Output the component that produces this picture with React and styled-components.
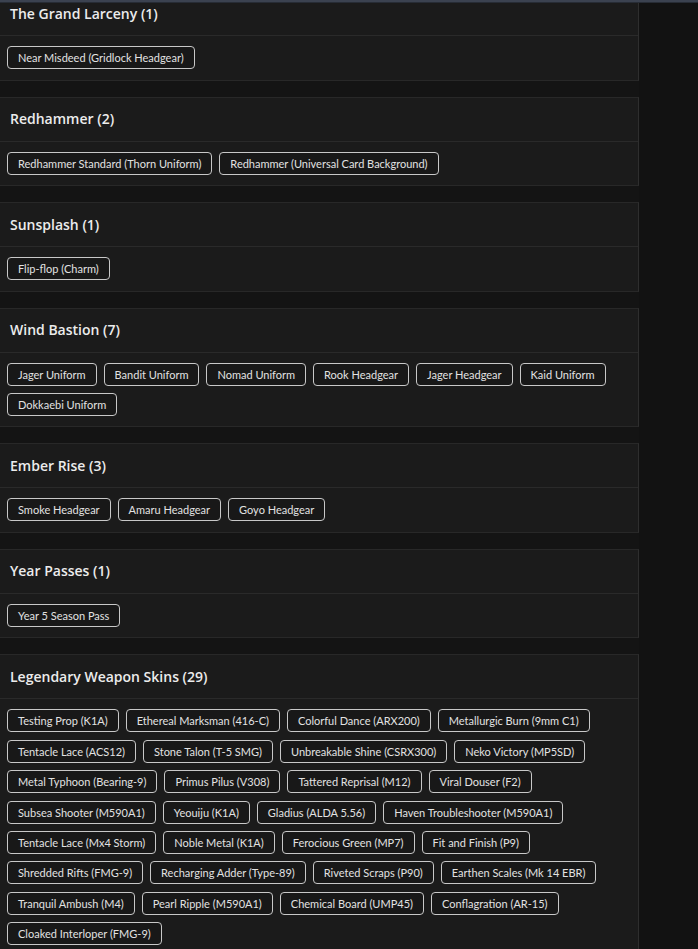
import React from "react";
import styled, { createGlobalStyle } from "styled-components";

const Global = createGlobalStyle`
  html, body { margin: 0; padding: 0; background: #121212; }
  body { font-family: "Lato", "Open Sans", sans-serif; color: #e6e6e6; }
  * { box-sizing: border-box; }
`;

const TopBar = styled.div`
  position: fixed;
  top: 0;
  left: 0;
  right: 0;
  height: 3px;
  background: #3b4250;
  border-bottom: 1px solid #272c35;
  z-index: 10;
`;

const Layout = styled.div`
  display: grid;
  grid-template-columns: 639px 1fr;
  min-height: 100vh;
`;

const Column = styled.main`
  display: flex;
  flex-direction: column;
  gap: 16px;
  margin-top: -9px;
  margin-left: -1px;
  background: #141414;
`;

const Side = styled.aside`
  background: #121212;
`;

const Card = styled.section`
  background: #1b1b1b;
  border: 1px solid #282828;
  border-right-color: #2e2e2e;
`;

const Header = styled.h3`
  margin: 0;
  height: 44px;
  display: flex;
  align-items: center;
  padding: 0 10px 1px;
  font-family: "Open Sans", "Lato", sans-serif;
  font-size: 14px;
  font-weight: 600;
  color: #ececec;
  border-bottom: 1px solid #2a2a2a;
`;

const Body = styled.div`
  display: flex;
  flex-wrap: wrap;
  gap: 7.4px 7px;
  padding: 10px 7px 10.5px;
`;

const Tag = styled.span`
  display: inline-flex;
  align-items: center;
  height: 23px;
  padding: 0 10px;
  font-size: 11px;
  color: #e2e2e2;
  background: #181818;
  border: 1px solid #c8c8c8;
  border-radius: 4px;
  white-space: nowrap;
`;

const groups = [
  { name: "The Grand Larceny", items: ["Near Misdeed (Gridlock Headgear)"] },
  {
    name: "Redhammer",
    items: [
      "Redhammer Standard (Thorn Uniform)",
      "Redhammer (Universal Card Background)",
    ],
  },
  { name: "Sunsplash", items: ["Flip-flop (Charm)"] },
  {
    name: "Wind Bastion",
    items: [
      "Jager Uniform",
      "Bandit Uniform",
      "Nomad Uniform",
      "Rook Headgear",
      "Jager Headgear",
      "Kaid Uniform",
      "Dokkaebi Uniform",
    ],
  },
  {
    name: "Ember Rise",
    items: ["Smoke Headgear", "Amaru Headgear", "Goyo Headgear"],
  },
  { name: "Year Passes", items: ["Year 5 Season Pass"] },
  {
    name: "Legendary Weapon Skins",
    items: [
      "Testing Prop (K1A)",
      "Ethereal Marksman (416-C)",
      "Colorful Dance (ARX200)",
      "Metallurgic Burn (9mm C1)",
      "Tentacle Lace (ACS12)",
      "Stone Talon (T-5 SMG)",
      "Unbreakable Shine (CSRX300)",
      "Neko Victory (MP5SD)",
      "Metal Typhoon (Bearing-9)",
      "Primus Pilus (V308)",
      "Tattered Reprisal (M12)",
      "Viral Douser (F2)",
      "Subsea Shooter (M590A1)",
      "Yeouiju (K1A)",
      "Gladius (ALDA 5.56)",
      "Haven Troubleshooter (M590A1)",
      "Tentacle Lace (Mx4 Storm)",
      "Noble Metal (K1A)",
      "Ferocious Green (MP7)",
      "Fit and Finish (P9)",
      "Shredded Rifts (FMG-9)",
      "Recharging Adder (Type-89)",
      "Riveted Scraps (P90)",
      "Earthen Scales (Mk 14 EBR)",
      "Tranquil Ambush (M4)",
      "Pearl Ripple (M590A1)",
      "Chemical Board (UMP45)",
      "Conflagration (AR-15)",
      "Cloaked Interloper (FMG-9)",
    ],
  },
];

export default function App() {
  return (
    <>
      <Global />
      <TopBar />
      <Layout>
        <Column>
          {groups.map((g) => (
            <Card key={g.name}>
              <Header>
                {g.name} ({g.items.length})
              </Header>
              <Body>
                {g.items.map((it) => (
                  <Tag key={it}>{it}</Tag>
                ))}
              </Body>
            </Card>
          ))}
        </Column>
        <Side />
      </Layout>
    </>
  );
}
